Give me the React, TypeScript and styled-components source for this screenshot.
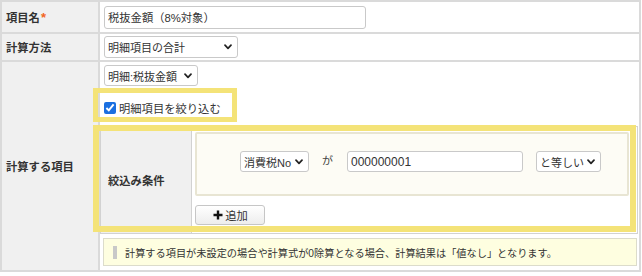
import React from 'react';
import styled, { createGlobalStyle } from 'styled-components';

const GlobalStyle = createGlobalStyle`
  html, body { margin: 0; padding: 0; background: #fff; }
  body {
    font-family: "Liberation Sans", "Noto Sans CJK JP", sans-serif;
    color: #333;
    font-size: 11.3px;
  }
  * { box-sizing: border-box; }
`;

const Wrap = styled.div`
  position: relative;
  width: 642px;
  height: 276px;
`;

const FormTable = styled.div`
  width: 641px;
  border: 2px solid #dadada;
  display: flex;
  flex-direction: column;
`;

const Row = styled.div<{ $h?: number }>`
  display: flex;
  min-height: ${({ $h }) => ($h ? `${$h}px` : 'auto')};
  & + & { border-top: 2px solid #dadada; }
`;

const LabelCell = styled.div`
  width: 98px;
  flex: none;
  background: #f0f0f0;
  border-right: 2px solid #dadada;
  padding: 0 4px;
  display: flex;
  align-items: center;
  font-weight: 700;
  font-size: 11.3px;
  color: #333;
`;

const Req = styled.span`
  color: #f26522;
  font-size: 13px;
  margin-left: 1px;
`;

const FieldCell = styled.div<{ $stack?: boolean }>`
  flex: 1;
  display: flex;
  flex-direction: ${({ $stack }) => ($stack ? 'column' : 'row')};
  align-items: ${({ $stack }) => ($stack ? 'stretch' : 'center')};
  padding: ${({ $stack }) => ($stack ? '3px 0 4px 0' : '0 4px')};
`;

const TextInput = styled.div<{ $w: number; $h?: number; $size?: number }>`
  width: ${({ $w }) => $w}px;
  height: ${({ $h }) => $h ?? 23}px;
  border: 1px solid #c9c9c9;
  border-radius: 3px;
  background: #fff;
  padding: 0 3px;
  display: flex;
  align-items: center;
  font-size: ${({ $size }) => $size ?? 11.3}px;
  color: #333;
  white-space: nowrap;
  flex: none;
`;

const SelectBox = styled.div<{ $w: number; $h?: number; $ml?: number }>`
  width: ${({ $w }) => $w}px;
  height: ${({ $h }) => $h ?? 22}px;
  margin-left: ${({ $ml }) => $ml ?? 0}px;
  border: 1px solid #c9c9c9;
  border-radius: 3px;
  background: #fff;
  padding: 0 5px 0 3px;
  display: flex;
  align-items: center;
  justify-content: space-between;
  font-size: 11px;
  color: #333;
  white-space: nowrap;
  flex: none;
`;

const Chevron = () => (
  <svg width="8" height="6" viewBox="0 0 8 6" style={{ flex: 'none' }}>
    <polyline points="1,1.2 4,4.4 7,1.2" fill="none" stroke="#222" strokeWidth="1.7" strokeLinecap="round" strokeLinejoin="round" />
  </svg>
);

const Select = ({ w, h, ml, children }: { w: number; h?: number; ml?: number; children: React.ReactNode }) => (
  <SelectBox $w={w} $h={h} $ml={ml}>
    <span>{children}</span>
    <Chevron />
  </SelectBox>
);

const CheckLine = styled.label`
  height: 24px;
  margin: 10px 0 0 4px;
  display: flex;
  align-items: center;
  gap: 3px;
  font-size: 11.3px;
  color: #333;
  input {
    width: 12px;
    height: 12px;
    margin: 0;
    accent-color: #1a6fe0;
  }
`;

const SubTable = styled.div`
  margin: 6px 1px 0 0;
  height: 108px;
  border: 1px solid #d2d2d2;
  display: flex;
`;

const SubLabel = styled.div`
  width: 91px;
  flex: none;
  background: #f0f0f0;
  border-right: 1px solid #d2d2d2;
  padding-left: 7px;
  display: flex;
  align-items: center;
  font-weight: 700;
  font-size: 11.3px;
`;

const SubBody = styled.div`
  flex: 1;
  padding: 5px 8px 0 3px;
  display: flex;
  flex-direction: column;
  align-items: flex-start;
`;

const CondPanel = styled.div`
  align-self: stretch;
  height: 64px;
  background: #fdfcf5;
  border: 2px solid #e8e5d3;
  border-radius: 2px;
  padding: 17px 0 0 43px;
  display: flex;
  align-items: flex-start;
`;

const Word = styled.span`
  margin: 0 14px 0 13px;
  line-height: 21px;
  font-size: 11px;
  color: #444;
`;

const AddButton = styled.button`
  margin-top: 9px;
  width: 70px;
  height: 20px;
  border: 1px solid #c6c6c6;
  border-radius: 3px;
  background: linear-gradient(180deg, #ffffff, #ededed);
  display: flex;
  align-items: center;
  justify-content: center;
  gap: 2px;
  padding: 0 0 0 1px;
  font-family: inherit;
  font-size: 11.3px;
  color: #333;
`;

const Note = styled.div`
  margin: 4px 2px 0 3px;
  height: 28px;
  border: 1px solid #dcdccb;
  background: #fefee0;
  padding-left: 9px;
  display: flex;
  align-items: center;
  gap: 8px;
  font-size: 10.2px;
  color: #333;
  white-space: nowrap;
`;

const NoteBar = styled.span`
  width: 4px;
  height: 13px;
  background: #c8c8c8;
  flex: none;
`;

const Highlight = styled.div<{ $x: number; $y: number; $w: number; $h: number; $b: number }>`
  position: absolute;
  left: ${({ $x }) => $x}px;
  top: ${({ $y }) => $y}px;
  width: ${({ $w }) => $w}px;
  height: ${({ $h }) => $h}px;
  border: ${({ $b }) => $b}px solid #f4e378;
  pointer-events: none;
`;

const PlusIcon = () => (
  <svg width="10" height="10" viewBox="0 0 10 10">
    <path d="M5 0.5v9M0.5 5h9" stroke="#111" strokeWidth="2.4" />
  </svg>
);

export default function App() {
  return (
    <Wrap>
      <GlobalStyle />
      <FormTable>
        <Row $h={30}>
          <LabelCell>
            項目名<Req>*</Req>
          </LabelCell>
          <FieldCell>
            <TextInput $w={262}>税抜金額（8%対象）</TextInput>
          </FieldCell>
        </Row>
        <Row $h={28}>
          <LabelCell>計算方法</LabelCell>
          <FieldCell>
            <Select w={134}>明細項目の合計</Select>
          </FieldCell>
        </Row>
        <Row>
          <LabelCell>計算する項目</LabelCell>
          <FieldCell $stack>
            <Select w={94} h={21} ml={4}>明細:税抜金額</Select>
            <CheckLine>
              <input type="checkbox" checked readOnly />
              明細項目を絞り込む
            </CheckLine>
            <SubTable>
              <SubLabel>絞込み条件</SubLabel>
              <SubBody>
                <CondPanel>
                  <Select w={69} h={21}>消費税No</Select>
                  <Word>が</Word>
                  <TextInput $w={176} $h={21} $size={12}>000000001</TextInput>
                  <Select w={65} h={21} ml={13}>と等しい</Select>
                </CondPanel>
                <AddButton type="button">
                  <PlusIcon />
                  追加
                </AddButton>
              </SubBody>
            </SubTable>
            <Note>
              <NoteBar />
              計算する項目が未設定の場合や計算式が0除算となる場合、計算結果は「値なし」となります。
            </Note>
          </FieldCell>
        </Row>
      </FormTable>
      <Highlight $x={93} $y={88} $w={144} $h={34} $b={5} />
      <Highlight $x={93} $y={125} $w={543} $h={107} $b={6} />
    </Wrap>
  );
}
